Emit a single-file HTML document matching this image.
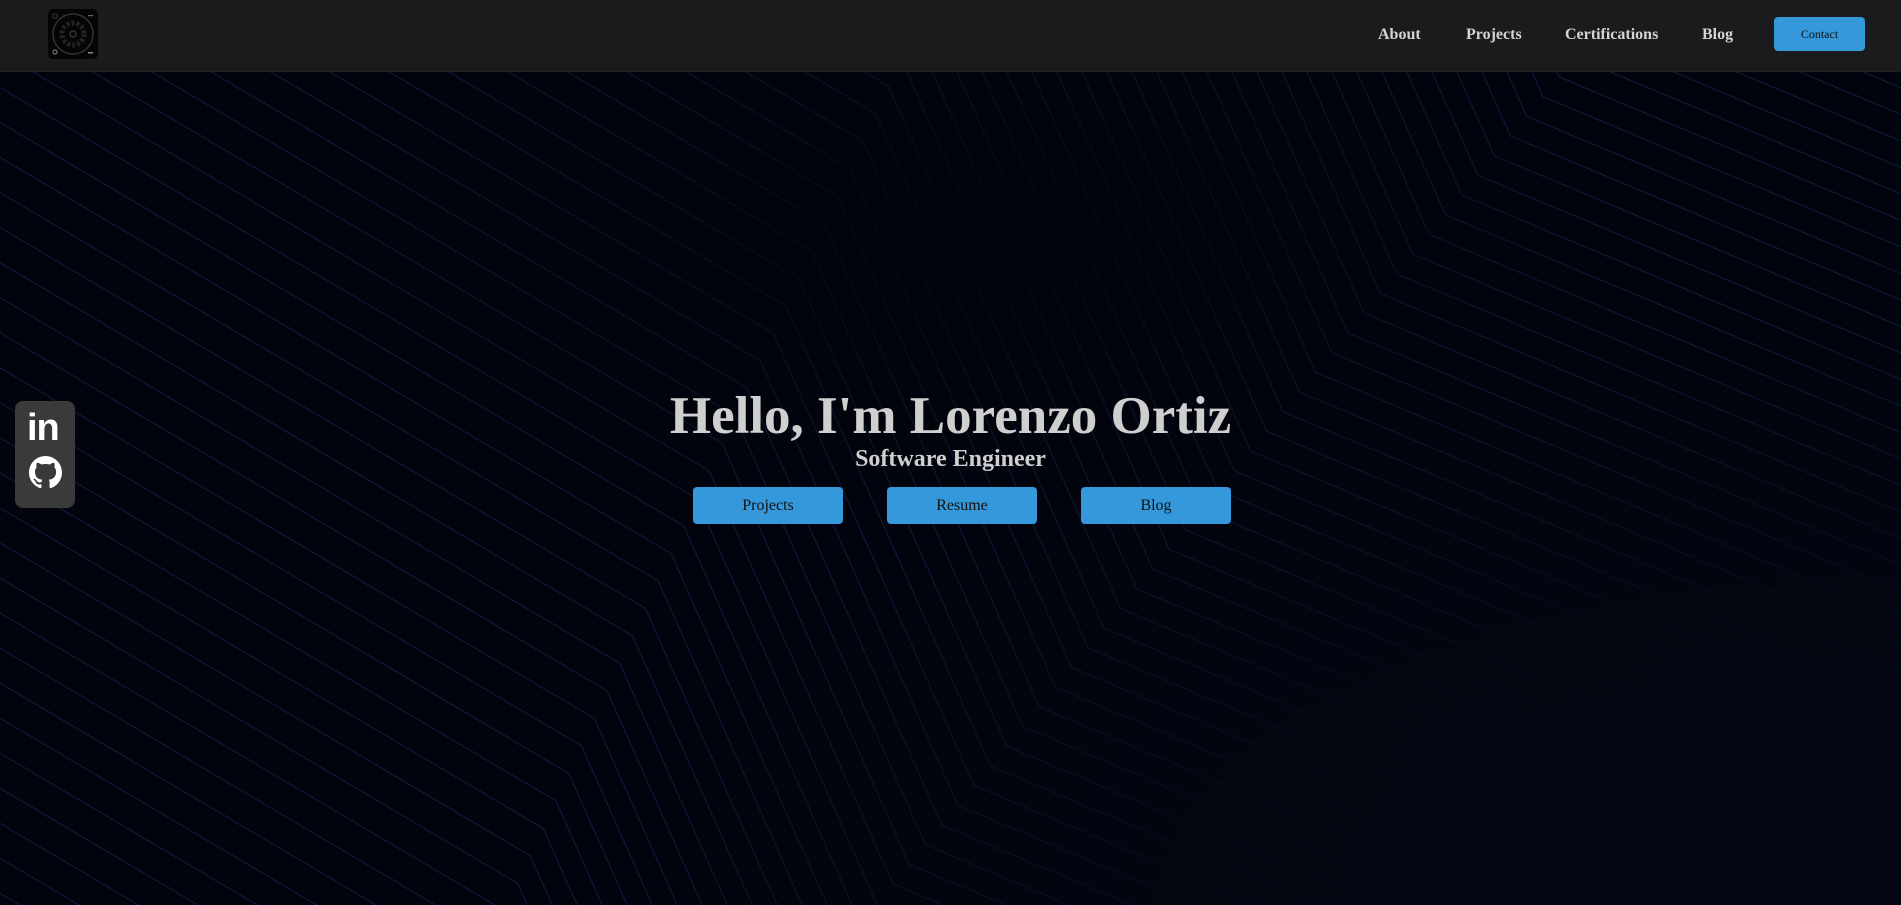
<!DOCTYPE html>
<html><head><meta charset="utf-8">
<style>
html,body{margin:0;padding:0;width:1901px;height:905px;overflow:hidden;background:#02040d;font-family:"Liberation Serif",serif;}
#bg{position:absolute;left:0;top:71px;width:1901px;height:834px;overflow:hidden;}
nav{position:absolute;left:0;top:0;width:1901px;height:71px;background:#1b1b1b;border-bottom:1px solid #222;z-index:3;}
.logo{position:absolute;left:48px;top:9px;width:50px;height:50px;background:#050505;border-radius:5px;}
.nl{position:absolute;top:26px;color:#d4d4d4;font-weight:bold;font-size:16px;}
.contact{position:absolute;left:1774px;top:17px;width:91px;height:34px;background:#3498db;border-radius:4px;color:#111;font-size:12px;text-align:center;line-height:34px;}
.hero{position:absolute;left:0;width:1901px;text-align:center;color:#cfcfcf;font-weight:bold;z-index:2}
h1{margin:0;}
.btn{position:absolute;top:487px;width:150px;height:37px;background:#3498db;border-radius:4px;color:#111;font-size:16px;text-align:center;line-height:37px;z-index:2}
.social{position:absolute;left:15px;top:401px;width:60px;height:107px;background:#3a3a3a;border-radius:8px;z-index:2}
</style></head><body>
<svg id="bg" viewBox="0 71 1901 834" xmlns="http://www.w3.org/2000/svg">
<defs>
<radialGradient id="v1" cx="0.52" cy="0.2" r="0.35"><stop offset="0" stop-color="#02040d" stop-opacity="0.95"/><stop offset="1" stop-color="#02040d" stop-opacity="0"/></radialGradient>
<radialGradient id="v2" cx="1" cy="1" r="0.7"><stop offset="0" stop-color="#020610" stop-opacity="1"/><stop offset="0.5" stop-color="#020610" stop-opacity="0.8"/><stop offset="1" stop-color="#020610" stop-opacity="0"/></radialGradient>
</defs>
<g id="lines" fill="none" stroke="#0d1f42" stroke-width="1"></g>
<rect x="0" y="71" width="1901" height="834" fill="url(#v1)"/>
<rect x="0" y="71" width="1901" height="834" fill="url(#v2)"/>
</svg>
<script>
(function(){
var g=document.getElementById('lines'),s='';
for(var x0=-700;x0<=2300;x0+=25){
 var y1=(928-x0)/0.909, b1x=x0+y1/2.25;
 var y2=(1622.7-x0)/1.27, b2x=x0+y2/2.25;
 if(y1>y2) continue;
 var lx=-100, ly=y1-(b1x-lx)*0.59;
 var rx=2100, ry=y2+(rx-b2x)*0.42;
 s+='<polyline points="'+lx+','+ly+' '+b1x+','+y1+' '+b2x+','+y2+' '+rx+','+ry+'"/>';
}
g.innerHTML=s;
})();
</script>
<nav>
<div class="logo"><svg width="50" height="50" viewBox="0 0 50 50"><circle cx="25" cy="25" r="20" fill="none" stroke="#333" stroke-width="1.5"/><circle cx="25" cy="25" r="11" fill="none" stroke="#222" stroke-width="5" stroke-dasharray="3 2"/><circle cx="25" cy="25" r="3" fill="none" stroke="#333" stroke-width="1.5"/><circle cx="7" cy="43" r="2" fill="none" stroke="#777" stroke-width="1.2"/><rect x="40" y="43" width="5" height="1.5" fill="#888"/><rect x="40" y="6" width="5" height="1.2" fill="#666"/><rect x="5" y="5" width="4" height="4" fill="none" stroke="#333"/></svg></div>
<div class="nl" style="left:1378px">About</div>
<div class="nl" style="left:1466px">Projects</div>
<div class="nl" style="left:1565px">Certifications</div>
<div class="nl" style="left:1702px">Blog</div>
<div class="contact">Contact</div>
</nav>
<div class="social">
<div style="position:absolute;left:12px;top:6px;color:#fff;font:bold 38px 'Liberation Sans',sans-serif;letter-spacing:-1px">in</div>
<svg style="position:absolute;left:14px;top:55px" width="33" height="33" viewBox="0 0 16 16"><path fill="#fff" d="M8 0C3.58 0 0 3.58 0 8c0 3.54 2.29 6.53 5.47 7.59.4.07.55-.17.55-.38 0-.19-.01-.82-.01-1.49-2.01.37-2.53-.49-2.69-.94-.09-.23-.48-.94-.82-1.13-.28-.15-.68-.52-.01-.53.63-.01 1.08.58 1.23.82.72 1.21 1.87.87 2.33.66.07-.52.28-.87.51-1.07-1.78-.2-3.64-.89-3.64-3.95 0-.87.31-1.59.82-2.15-.08-.2-.36-1.02.08-2.12 0 0 .67-.21 2.2.82.64-.18 1.32-.27 2-.27.68 0 1.36.09 2 .27 1.53-1.04 2.2-.82 2.2-.82.44 1.1.16 1.92.08 2.12.51.56.82 1.27.82 2.15 0 3.07-1.87 3.75-3.65 3.95.29.25.54.73.54 1.48 0 1.07-.01 1.93-.01 2.2 0 .21.15.46.55.38A8.013 8.013 0 0016 8c0-4.42-3.58-8-8-8z"/></svg>
</div>
<div class="hero" style="top:386px"><h1 style="font-size:53px;line-height:60px">Hello, I'm Lorenzo Ortiz</h1></div>
<div class="hero" style="top:444px;font-size:24px;line-height:30px">Software Engineer</div>
<div class="btn" style="left:693px">Projects</div>
<div class="btn" style="left:887px">Resume</div>
<div class="btn" style="left:1081px">Blog</div>
</body></html>
